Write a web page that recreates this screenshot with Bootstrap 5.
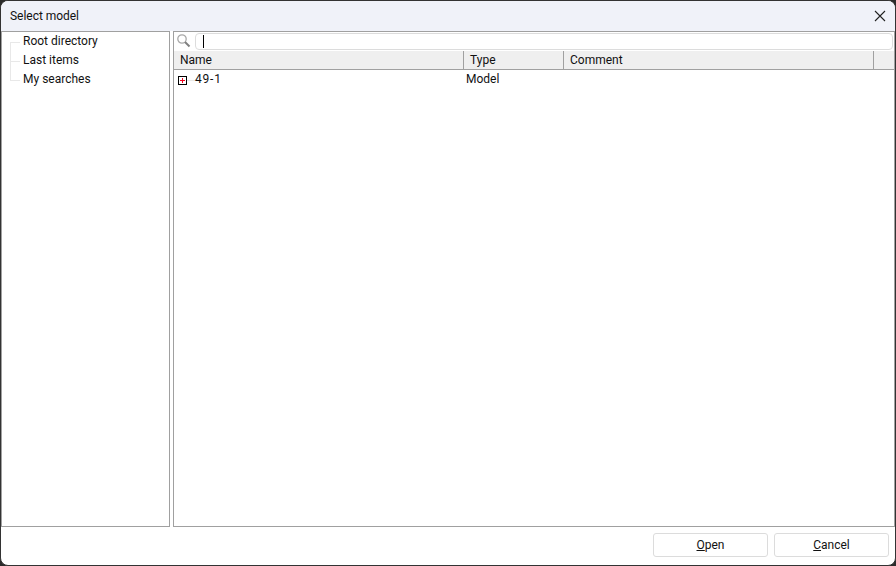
<!DOCTYPE html>
<html lang="en">
<head>
<meta charset="utf-8">
<title>Select model</title>
<link rel="stylesheet" href="https://cdn.jsdelivr.net/npm/bootstrap@5.3.0/dist/css/bootstrap.min.css">
<style>
html,body{margin:0;height:566px;background:#2b2b2b;overflow:hidden}
body{font-family:Roboto,"Liberation Sans",sans-serif;font-size:12px;line-height:19px;color:#111}
.dlg-win{width:896px;height:566px;border:1px solid #333;border-radius:8px;background:#fff;overflow:hidden}
.dlg-title{height:30px;background:#f0f2f9}
.dlg-title-text{padding-left:9px;letter-spacing:-.03px}
.dlg-close{width:30px;height:30px;padding:0;border:0;background:transparent}
.dlg-body{height:496px;gap:3px}
.dlg-tree{width:169px;border:1px solid #a0a0a0}
.dlg-tree-row{height:19px;line-height:19px;padding-left:21px;position:relative}
.dlg-tree-row::before{content:"";position:absolute;left:8px;top:10px;width:10px;border-top:1px solid #e8e8e8}
.dlg-tree-row::after{content:"";position:absolute;left:8px;top:0;height:19px;border-left:1px solid #e8e8e8}
.dlg-tree-row:first-child::after{top:10px;height:9px}
.dlg-tree-row:last-child::after{height:10px}
.dlg-main{width:722px;border:1px solid #a0a0a0}
.dlg-search{height:19px;padding:1px 1px 0 3px;gap:4px}
.dlg-input{width:698px;height:17px;border:1px solid #dcdcdc;border-radius:4px;position:relative}
.dlg-caret{position:absolute;left:7px;top:1px;height:13px;border-left:1px solid #000}
.dlg-head{height:19px;background:#efefef;border-bottom:1px solid #a0a0a0}
.dlg-hcell{padding-left:6px;border-right:1px solid #a0a0a0;height:18px;line-height:18px}
.dlg-row{height:19px;line-height:18px}
.dlg-col-name{width:290px}
.dlg-col-type{width:100px}
.dlg-col-comment{width:310px}
.dlg-expander{width:9px;height:9px;border:1px solid #000;margin:6px 0 0 4px;position:relative;flex:none}
.dlg-expander::before{content:"";position:absolute;left:1px;top:3px;width:5px;height:1px;background:#f0001c}
.dlg-expander::after{content:"";position:absolute;left:3px;top:1px;width:1px;height:5px;background:#f0001c}
.dlg-link{width:8px;height:10px;flex:none;border-top:1px solid #e8e8e8;margin-top:10px}
.dlg-node{letter-spacing:.8px}
.dlg-type{padding-left:2px}
.dlg-foot{height:37px;gap:6px;padding:6px 6px 0 0}
.dlg-btn{width:115px;height:24px;padding:0;font-size:12px;line-height:22px;color:#111;background:#fff;border:1px solid #dcdcdc;border-radius:3px}
</style>
</head>
<body>
<div class="dlg-win d-flex flex-column">
  <div class="dlg-title d-flex align-items-center justify-content-between">
    <span class="dlg-title-text">Select model</span>
    <button class="dlg-close d-flex align-items-center justify-content-center" type="button" aria-label="Close">
      <svg width="12" height="12" viewBox="0 0 12 12"><path d="M1 1L11 11M11 1L1 11" stroke="#222" stroke-width="1.1" fill="none"/></svg>
    </button>
  </div>
  <div class="dlg-body d-flex">
    <div class="dlg-tree">
      <div class="dlg-tree-row">Root directory</div>
      <div class="dlg-tree-row">Last items</div>
      <div class="dlg-tree-row">My searches</div>
    </div>
    <div class="dlg-main d-flex flex-column">
      <div class="dlg-search d-flex align-items-start">
        <svg width="14" height="16" viewBox="0 0 14 16"><circle cx="5" cy="6" r="4.2" fill="none" stroke="#a8a8a8" stroke-width="1.3"/><path d="M8 9L12.5 13.5" stroke="#808080" stroke-width="2"/></svg>
        <div class="dlg-input"><span class="dlg-caret"></span></div>
      </div>
      <div class="dlg-head d-flex">
        <div class="dlg-hcell dlg-col-name">Name</div>
        <div class="dlg-hcell dlg-col-type">Type</div>
        <div class="dlg-hcell dlg-col-comment">Comment</div>
      </div>
      <div class="dlg-row d-flex">
        <div class="d-flex dlg-col-name"><span class="dlg-expander"></span><span class="dlg-link"></span><span class="dlg-node">49-1</span></div>
        <div class="dlg-type">Model</div>
      </div>
    </div>
  </div>
  <div class="dlg-foot d-flex justify-content-end">
    <button class="dlg-btn btn" type="button"><u>O</u>pen</button>
    <button class="dlg-btn btn" type="button"><u>C</u>ancel</button>
  </div>
</div>
<script src="https://cdn.jsdelivr.net/npm/bootstrap@5.3.0/dist/js/bootstrap.bundle.min.js"></script>
</body>
</html>
